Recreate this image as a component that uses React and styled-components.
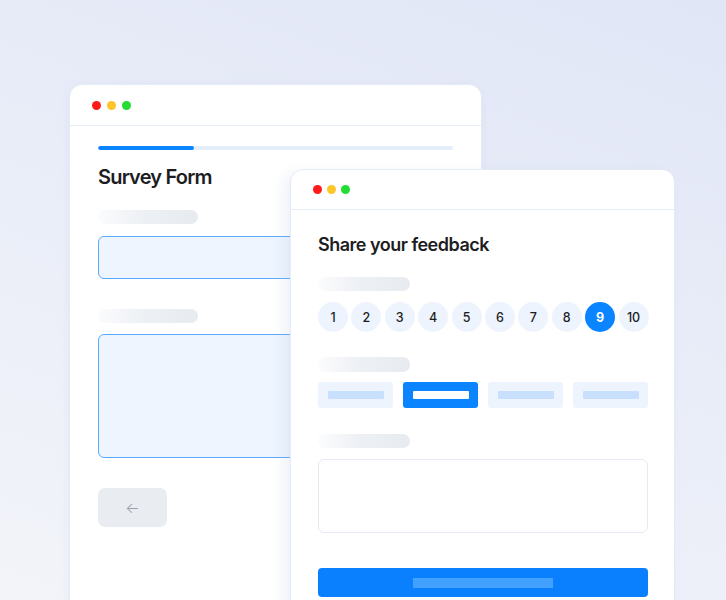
import React from 'react';
import styled, { createGlobalStyle } from 'styled-components';

const GlobalStyle = createGlobalStyle`
    html, body {
        margin:0;
        padding:0;
    }
    body {
        font-family:Inter, "Noto Sans", sans-serif;
        color:#1d1d1f;
    }
`

const Scene = styled.div`
    position:relative;
    width:726px;
    height:600px;
    overflow:hidden;
    background:linear-gradient(200deg, #e1e6f7 0%, #e9edf8 45%, #f2f4f9 100%);
`

const Window = styled.div`
    position:absolute;
    left:${p => p.x}px;
    top:${p => p.y}px;
    width:${p => p.w}px;
    height:${p => p.h}px;
    background:#fff;
    border:1px solid #e4eaf6;
    border-radius:13px;
    box-shadow:${p => p.front ? '-6px 4px 14px rgba(160,175,210,0.18)' : '0 2px 10px rgba(160,175,210,0.12)'};
    box-sizing:border-box;
    display:flex;
    flex-direction:column;
`

const TitleBar = styled.div`
    height:${p => p.h}px;
    flex:none;
    display:flex;
    align-items:center;
    gap:${p => p.gap}px;
    padding:0 0 0 22px;
    border-bottom:1px solid #e6edf7;
`

const Dot = styled.span`
    width:9px;
    height:9px;
    border-radius:50%;
    background:${p => p.color};
`

const Body = styled.div`
    display:flex;
    flex-direction:column;
    align-items:flex-start;
    padding:${p => p.pad};
`

const Progress = styled.div`
    width:100%;
    height:4px;
    border-radius:2px;
    background:#e6eef9;
    overflow:hidden;
    div{
        height:100%;
        background:#0a84ff;
        border-radius:2px;
    }
`

const Title = styled.h1`
    margin:${p => p.mt}px 0 0;
    font-size:${p => p.size}px;
    line-height:24px;
    font-weight:600;
    letter-spacing:${p => p.ls}px;
    color:#1d1d1f;
`

const LabelBar = styled.div`
    margin-top:${p => p.mt}px;
    width:${p => p.w}px;
    height:${p => p.h || 14}px;
    border-radius:7px;
    background:linear-gradient(90deg, #fbfcfd 0%, #edf0f4 45%, #e7ebf0 100%);
`

const Field = styled.div`
    margin-top:${p => p.mt}px;
    width:100%;
    height:${p => p.h}px;
    box-sizing:border-box;
    border:1px solid ${p => p.plain ? '#e6eaf3' : '#5aaaff'};
    background:${p => p.plain ? '#fff' : '#eef5fe'};
    border-radius:6px;
`

const BackButton = styled.div`
    margin-top:30px;
    width:69px;
    height:39px;
    border-radius:7px;
    background:#e9ecf0;
    display:flex;
    align-items:center;
    justify-content:center;
    color:#9aa0a8;
    font-size:15px;
    font-weight:300;
`

const Scale = styled.div`
    margin-top:11px;
    display:flex;
    gap:3.4px;
`

const ScaleItem = styled.div`
    width:30px;
    height:30px;
    border-radius:50%;
    display:flex;
    align-items:center;
    justify-content:center;
    font-size:12.5px;
    font-weight:${p => p.active ? 700 : 500};
    background:${p => p.active ? '#0a84ff' : '#eef4fd'};
    color:${p => p.active ? '#fff' : '#1d1d1f'};
`

const Options = styled.div`
    margin-top:10px;
    width:100%;
    display:grid;
    grid-template-columns:repeat(4, 1fr);
    gap:10px;
`

const Option = styled.div`
    height:26px;
    border-radius:3px;
    background:${p => p.active ? '#0a84ff' : '#eef4fd'};
    display:flex;
    align-items:center;
    justify-content:center;
    span{
        width:56px;
        height:8px;
        border-radius:1px;
        background:${p => p.active ? '#fff' : '#c8e0fd'};
    }
`

const Submit = styled.div`
    margin-top:35px;
    width:100%;
    height:29px;
    border-radius:4px;
    background:#0a80ff;
    display:flex;
    align-items:center;
    justify-content:center;
    span{
        width:140px;
        height:10px;
        background:#42a0ff;
    }
`

function Dots() {
    return (
        <>
            <Dot color="#ff1a1a" />
            <Dot color="#fcc52a" />
            <Dot color="#22dd33" />
        </>
    )
}

export default function App() {
    const scale = [1, 2, 3, 4, 5, 6, 7, 8, 9, 10];

    return (
        <Scene>
            <GlobalStyle />
            <Window x={69} y={84} w={413} h={560}>
                <TitleBar h={40} gap={6}>
                    <Dots />
                </TitleBar>
                <Body pad="20px 28px 0 28px">
                    <Progress>
                        <div style={{ width: '27%' }} />
                    </Progress>
                    <Title mt={15} size={20} ls={-0.8}>Survey Form</Title>
                    <LabelBar mt={21} w={100} />
                    <Field mt={12} h={43} />
                    <LabelBar mt={30} w={100} />
                    <Field mt={11} h={124} />
                    <BackButton>←</BackButton>
                </Body>
            </Window>

            <Window front x={290} y={169} w={385} h={480}>
                <TitleBar h={39} gap={5}>
                    <Dots />
                </TitleBar>
                <Body pad="23px 26px 0 27px">
                    <Title mt={0} size={18} ls={-0.5}>Share your feedback</Title>
                    <LabelBar mt={20} w={92} />
                    <Scale>
                        {scale.map(n => (
                            <ScaleItem key={n} active={n === 9}>{n}</ScaleItem>
                        ))}
                    </Scale>
                    <LabelBar mt={25} w={92} h={15} />
                    <Options>
                        <Option><span /></Option>
                        <Option active><span /></Option>
                        <Option><span /></Option>
                        <Option><span /></Option>
                    </Options>
                    <LabelBar mt={26} w={92} />
                    <Field plain mt={11} h={74} />
                    <Submit><span /></Submit>
                </Body>
            </Window>
        </Scene>
    )
}
